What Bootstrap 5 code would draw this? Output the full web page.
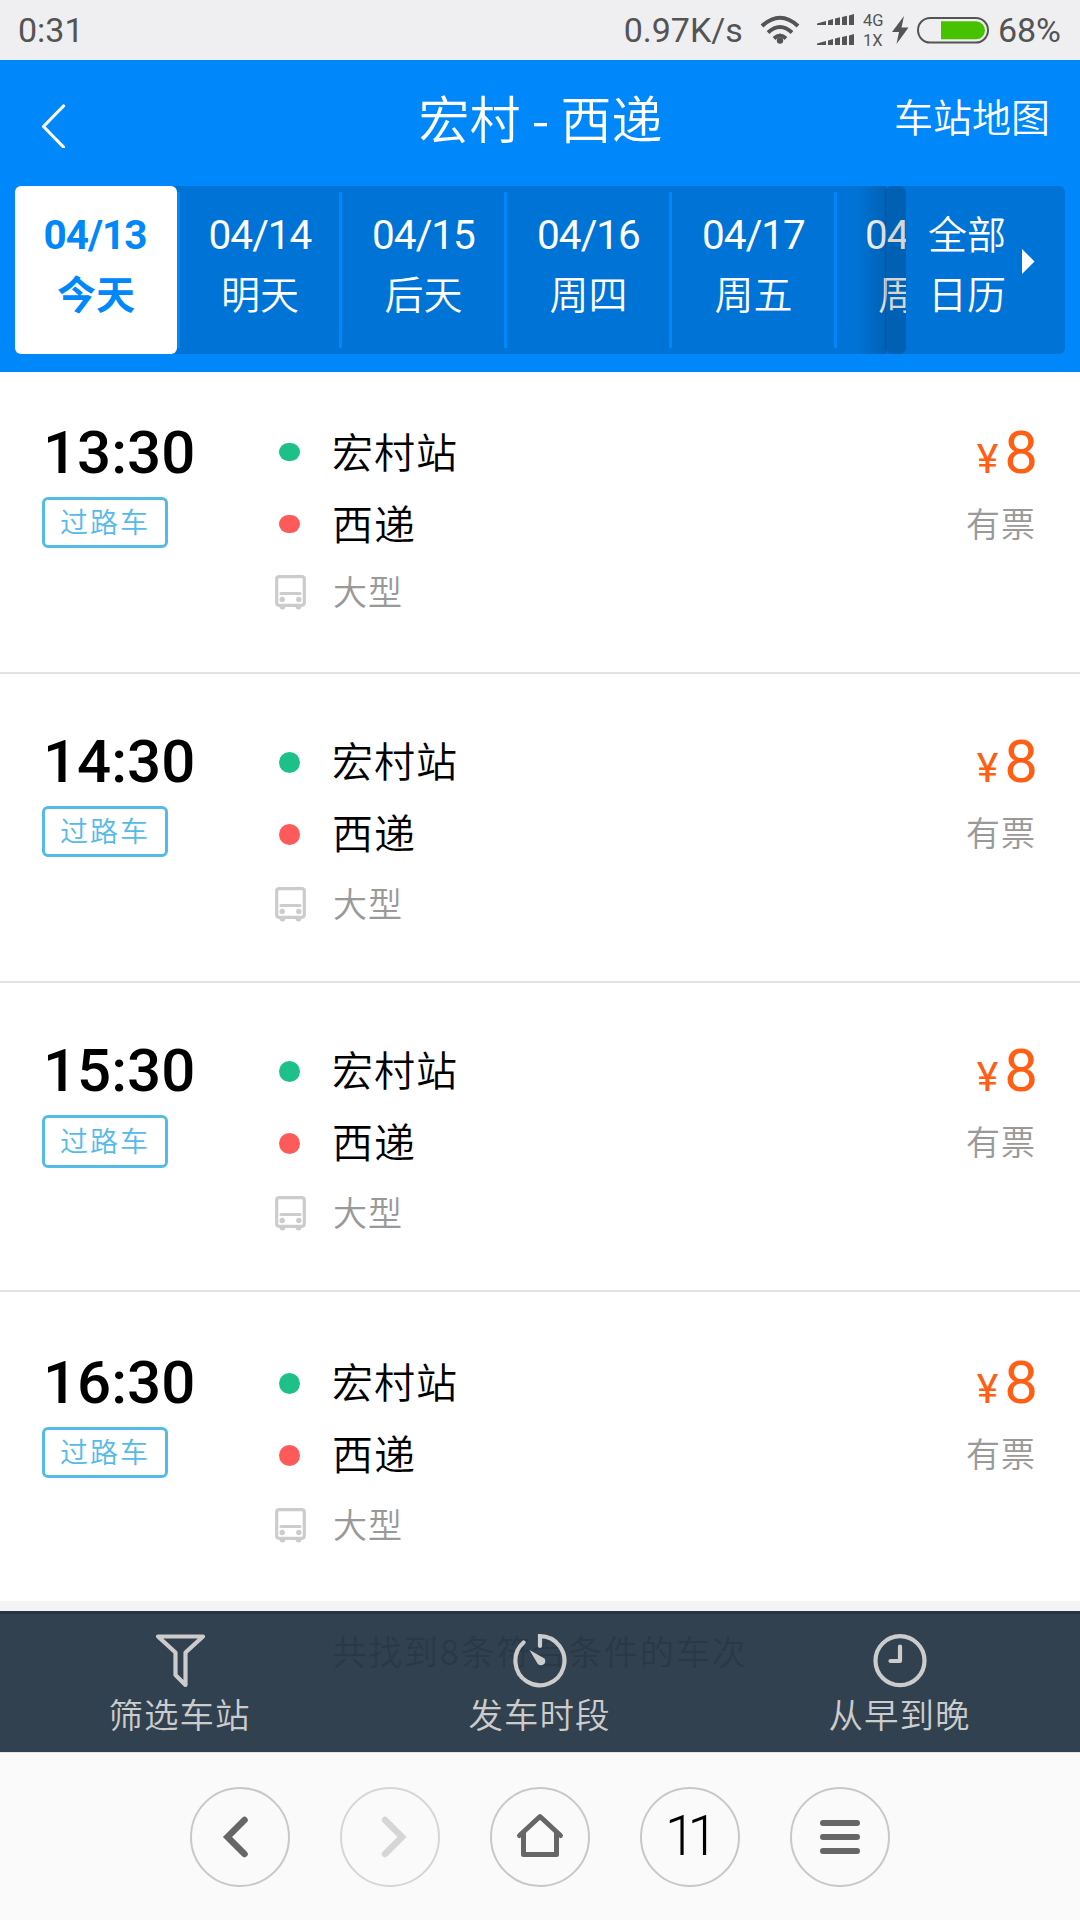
<!DOCTYPE html>
<html lang="zh-CN">
<head>
<meta charset="utf-8">
<meta name="viewport" content="width=device-width, initial-scale=1">
<title>宏村 - 西递</title>
<link href="https://cdn.jsdelivr.net/npm/bootstrap@5.3.0/dist/css/bootstrap.min.css" rel="stylesheet">
<style>
:root{--cjk:"Noto Sans CJK SC",sans-serif;--blue:#0087fa;--deep:#0073d6}
body{width:1080px;height:1920px;font-family:var(--cjk);font-weight:350;color:#000;overflow:hidden}
svg{display:block;flex:none}
.latin{font-family:Roboto,sans-serif;font-weight:400}
.statusbar{height:60px;background:#efeff1;color:#545454;font-size:34px;line-height:60px;padding:0 21px 0 18px}
.net{font-size:16.5px;line-height:20px;width:24px;padding-top:1px}
.apphead{height:312px;background:var(--blue);color:#fff}
.titlebar{height:126px;padding:0 30px 0 40px}
.titlebar>*{flex:1 1 0}
.titlebar h1{font-size:51px;font-weight:350;line-height:60px;margin:-12px 9px 0 0;text-align:center;white-space:nowrap}
.titlebar svg{margin-top:3px}
.maplink{font-size:39px;line-height:50px;margin-top:-16px;text-align:right}
.days{margin:0 15px;height:168px;background:var(--deep);border-radius:6px}
.dayscroll{width:891px}
.day{flex:0 0 165px;height:168px;padding:14px 0 0 4px;text-align:center;position:relative}
.day .latin{font-size:40.5px;letter-spacing:-1px;line-height:60px;padding-top:5px}
.day .word{font-size:39px;line-height:50px;margin-top:2px}
.day+.day::before{content:"";position:absolute;left:0;top:6px;width:3px;height:156px;background:var(--blue)}
.day.today{flex-basis:162px;padding-left:0;background:#fff;color:var(--blue);border-radius:6px}
.day.today+.day{flex-basis:162px}
.day.today .latin,.day.today .word{font-weight:700}
.day.today .latin{margin-left:-2px}
.day.today .word{font-weight:600}
.day.peek{text-align:left}
.day.peek .latin{padding-left:27px}
.day.peek .word{padding-left:40px}
.fade-edge{position:absolute;right:20px;top:0;width:30px;height:168px;background:linear-gradient(90deg,rgba(0,0,0,0),rgba(0,0,0,.15))}
.fade-cap{position:absolute;right:0;top:0;width:21px;height:168px;background:rgba(0,0,0,.16);border-radius:6px}
.allday{flex:1;padding:0 0 17px 22px;font-size:39px;line-height:60px;gap:16px}
.trip{height:309px;padding:57px 43px 0 42px;border-bottom:2px solid #e3e3e3;background:#fff}
.trip.first{height:302px;padding-top:48px}
.trip.mid{padding-top:55px}
.trip.last{padding-top:58px;border:0}
.when{width:233px;padding-top:3px}
.clock{font-family:Roboto,sans-serif;font-weight:500;font-size:60px;line-height:60px;padding-left:1px}
.tag{width:126px;height:51px;margin-top:14px;border:3px solid #54bbe9;border-radius:6px;color:#54bbe9;font-size:28px;letter-spacing:2px;line-height:43px;padding-left:15px;white-space:nowrap}
.tall .tag{height:53px;line-height:45px}
.leg{height:60px;margin-bottom:12px;font-size:41px;letter-spacing:1px;line-height:59px}
.leg i{width:21px;height:21px;border-radius:50%;margin:6px 32px 0 4px}
.first .leg i{height:18px;border-radius:9px;margin-top:4px}
.go{background:#1dc188}.arrive{background:#ff5a5a}
.bus{height:60px;font-size:34px;letter-spacing:1px;line-height:60px;color:#999}
.first .bus{margin-top:-3px}
.bus svg{margin:2px 27px 0 0}
.fare{padding-top:3px;text-align:right}
.fare .latin{color:#ff5e13;font-size:60px;line-height:60px;margin-right:-1px}
.fare small{font-size:41px;margin-right:6px}
.left-seats{font-size:34px;letter-spacing:1px;line-height:60px;margin-top:4px;color:#999;margin-right:1px}
.gap-strip{height:10px;background:#f4f4f4}
.tools{height:141px;background:#32414f;border-top:3px solid #273443;color:#ccc;position:relative}
.ghost{position:absolute;left:0;right:0;top:12px;text-align:center;font-size:34px;letter-spacing:1.9px;line-height:50px;color:#2b3947}
.tool{flex:1;padding-top:18px;position:relative;font-size:34.5px;letter-spacing:1px;line-height:50px}
.tool div{margin:0 1px 0 0}
.browser{height:168px;background:#fafafa;border-top:1px solid #e4e4e4;padding-top:34px;gap:50px}
.round{width:100px;height:100px;border:2px solid #c8c8c8;border-radius:50%}
.round.off{border-color:#d6d6d6}
.pages{font-size:55px;font-weight:300;letter-spacing:-8px;line-height:95px;padding-right:5px;color:#000}
</style>
<script src="https://cdn.jsdelivr.net/npm/bootstrap@5.3.0/dist/js/bootstrap.bundle.min.js"></script>
</head>
<body>
<svg width="0" height="0" class="position-absolute"><defs>
<symbol id="bus" viewBox="0 0 31 35"><rect x="1.7" y="1.7" width="27.6" height="28.6" rx="2.5" fill="none" stroke="#ccc" stroke-width="3.2"/><path d="M6 18.5H25" stroke="#ccc" stroke-width="3" stroke-linecap="round"/><circle cx="7.2" cy="24.5" r="2.7" fill="#ccc"/><circle cx="23.8" cy="24.5" r="2.7" fill="#ccc"/><path d="M4.5 31H10.500a3 3.500 0 0 1-6 0zM20.500 31H26.500a3 3.500 0 0 1-6 0z" fill="#ccc"/></symbol>
</defs></svg>

<div class="statusbar latin d-flex align-items-center">
  <span class="me-auto">0:31</span>
  <span style="margin-right:17px">0.97K/s</span>
  <svg width="40" height="30" viewBox="0 0 40 30" fill="none" stroke="#545454" stroke-width="4"><path d="M2 11Q20-5.500 38 11M8 17.500Q20 6.500 32 17.500M14 23.500Q20 17.500 26 23.500"/><circle cx="20" cy="25.500" r="3.200" fill="#545454" stroke="none"/></svg>
  <svg style="margin-left:17px" width="38" height="32" viewBox="0 0 38 32" fill="#545454"><g id="sig"><path d="M0 9.500L9 7V11H0zM11 6.500L16 5V11H11zM18 4.500L23 3.200V11H18zM25 3L30 1.700V11H25zM32 1.500L37 0V11H32z"/></g><use href="#sig" y="20"/></svg>
  <span class="net ms-2">4G<br>1X</span>
  <svg class="ms-1" width="18" height="30" viewBox="0 0 18 30" fill="#545454"><path d="M13 1L1 17H8L5.500 29L17.500 12.500H10.500z"/></svg>
  <svg class="ms-2" width="72" height="28" viewBox="0 0 72 28"><rect x="1" y="2" width="70" height="24.500" rx="12.200" fill="none" stroke="#545454" stroke-width="2"/><path d="M24 5.300H59a9 9 0 0 1 0 18H24z" fill="#47c200"/></svg>
  <span style="margin-left:9px;margin-right:-2px">68%</span>
</div>

<header class="apphead">
  <nav class="titlebar d-flex align-items-center">
    <div><svg width="26" height="46" viewBox="0 0 26 46" fill="none" stroke="#fff" stroke-width="3.200" stroke-linecap="round" stroke-linejoin="round"><path d="M23.500 4L3.500 24.500L23.500 45"/></svg></div>
    <h1>宏村 - 西递</h1>
    <div class="maplink">车站地图</div>
  </nav>
  <div class="days d-flex">
    <div class="dayscroll d-flex overflow-hidden position-relative">
      <div class="day today"><div class="latin">04/13</div><div class="word">今天</div></div>
      <div class="day"><div class="latin">04/14</div><div class="word">明天</div></div>
      <div class="day"><div class="latin">04/15</div><div class="word">后天</div></div>
      <div class="day"><div class="latin">04/16</div><div class="word">周四</div></div>
      <div class="day"><div class="latin">04/17</div><div class="word">周五</div></div>
      <div class="day peek"><div class="latin">04</div><div class="word">周</div></div>
      <span class="fade-edge"></span><span class="fade-cap"></span>
    </div>
    <div class="allday d-flex align-items-center"><div>全部<br>日历</div><svg width="13" height="25" viewBox="0 0 13 25"><path d="M0 0L12.500 12.500L0 25z" fill="#fff"/></svg></div>
  </div>
</header>

<main>
  <section class="trip first d-flex">
    <div class="when"><div class="clock">13:30</div><div class="tag">过路车</div></div>
    <div class="flex-grow-1">
      <div class="leg d-flex align-items-center"><i class="go"></i>宏村站</div>
      <div class="leg d-flex align-items-center"><i class="arrive"></i>西递</div>
      <div class="bus d-flex align-items-center"><svg width="31" height="35"><use href="#bus"/></svg>大型</div>
    </div>
    <div class="fare"><div class="latin"><small>¥</small>8</div><div class="left-seats">有票</div></div>
  </section>
  <section class="trip mid d-flex">
    <div class="when"><div class="clock">14:30</div><div class="tag">过路车</div></div>
    <div class="flex-grow-1">
      <div class="leg d-flex align-items-center"><i class="go"></i>宏村站</div>
      <div class="leg d-flex align-items-center"><i class="arrive"></i>西递</div>
      <div class="bus d-flex align-items-center"><svg width="31" height="35"><use href="#bus"/></svg>大型</div>
    </div>
    <div class="fare"><div class="latin"><small>¥</small>8</div><div class="left-seats">有票</div></div>
  </section>
  <section class="trip mid tall d-flex">
    <div class="when"><div class="clock">15:30</div><div class="tag">过路车</div></div>
    <div class="flex-grow-1">
      <div class="leg d-flex align-items-center"><i class="go"></i>宏村站</div>
      <div class="leg d-flex align-items-center"><i class="arrive"></i>西递</div>
      <div class="bus d-flex align-items-center"><svg width="31" height="35"><use href="#bus"/></svg>大型</div>
    </div>
    <div class="fare"><div class="latin"><small>¥</small>8</div><div class="left-seats">有票</div></div>
  </section>
  <section class="trip last d-flex">
    <div class="when"><div class="clock">16:30</div><div class="tag">过路车</div></div>
    <div class="flex-grow-1">
      <div class="leg d-flex align-items-center"><i class="go"></i>宏村站</div>
      <div class="leg d-flex align-items-center"><i class="arrive"></i>西递</div>
      <div class="bus d-flex align-items-center"><svg width="31" height="35"><use href="#bus"/></svg>大型</div>
    </div>
    <div class="fare"><div class="latin"><small>¥</small>8</div><div class="left-seats">有票</div></div>
  </section>
  <div class="gap-strip"></div>
</main>

<div class="tools d-flex">
  <div class="ghost">共找到8条符合条件的车次</div>
  <div class="tool d-flex flex-column align-items-center">
    <svg width="54" height="56" viewBox="0 0 54 56" fill="none" stroke="#ccc" stroke-width="4.200" stroke-linejoin="round"><path d="M5 4.500H50L32.500 20.500V53L22.500 43V20.500z"/></svg>
    <div>筛选车站</div>
  </div>
  <div class="tool d-flex flex-column align-items-center">
    <svg width="54" height="56" viewBox="0 0 54 56" fill="none" stroke="#ccc" stroke-width="4.200" stroke-linecap="round"><path d="M10.500 10.500A24.500 24.500 0 1 0 27 4.200V14" stroke-linejoin="miter"/><path d="M16.500 18L31.500 26.500A4 4 0 0 1 24.500 31.500z" fill="#ccc" stroke="none"/></svg>
    <div>发车时段</div>
  </div>
  <div class="tool d-flex flex-column align-items-center">
    <svg width="54" height="56" viewBox="0 0 54 56" fill="none" stroke="#ccc" stroke-width="4.200" stroke-linecap="round" stroke-linejoin="round"><circle cx="27" cy="28.700" r="24.500"/><path d="M27 14.500V29H17.500"/></svg>
    <div>从早到晚</div>
  </div>
</div>

<footer class="browser d-flex justify-content-center">
  <div class="round d-flex align-items-center justify-content-center"><svg width="96" height="96" viewBox="2 2 96 96" fill="none" stroke="#666" stroke-width="6.500" stroke-linecap="round"><path d="M54.500 33L37.500 50L54.500 67"/></svg></div>
  <div class="round off d-flex align-items-center justify-content-center"><svg width="96" height="96" viewBox="2 2 96 96" fill="none" stroke="#d6d6d6" stroke-width="6.500" stroke-linecap="round"><path d="M45 33L62 50L45 67"/></svg></div>
  <div class="round d-flex align-items-center justify-content-center"><svg width="96" height="96" viewBox="2 2 96 96" fill="none" stroke="#666" stroke-width="5" stroke-linecap="round" stroke-linejoin="round"><path d="M29.500 48.500L50 29.500L70.500 48.500M33.500 46V67.500H66.500V46"/></svg></div>
  <div class="round d-flex justify-content-center"><span class="pages latin">11</span></div>
  <div class="round d-flex align-items-center justify-content-center"><svg width="96" height="96" viewBox="2 2 96 96" stroke="#666" stroke-width="6" stroke-linecap="round"><path d="M33 36H67M33 50H67M33 64H67"/></svg></div>
</footer>
</body>
</html>
